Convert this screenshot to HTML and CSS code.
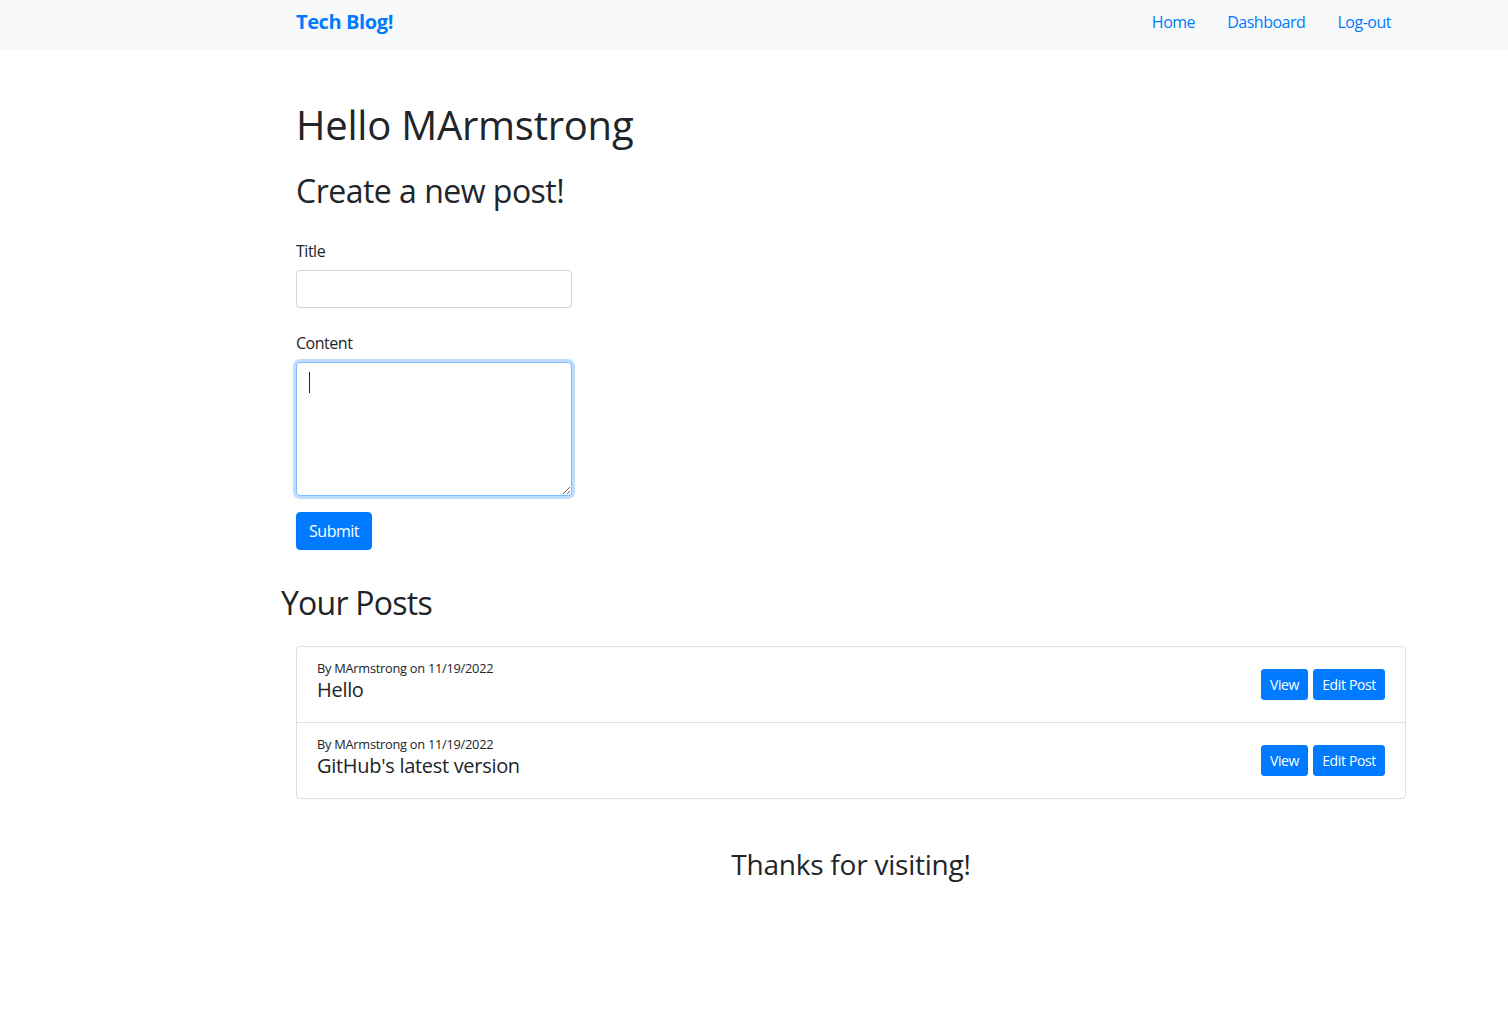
FILE: index.html
```html
<!DOCTYPE html>
<html lang="en">
<head>
<meta charset="utf-8">
<title>Tech Blog!</title>
<link rel="stylesheet" href="styles.css">
</head>
<body>
<nav class="navbar">
  <div class="nav-inner">
    <a class="brand" href="#">Tech Blog!</a>
    <ul class="nav-links">
      <li><a href="#">Home</a></li>
      <li><a href="#">Dashboard</a></li>
      <li><a href="#">Log-out</a></li>
    </ul>
  </div>
</nav>
<main class="container">
  <h1 class="greeting">Hello MArmstrong</h1>
  <h2 class="create-title">Create a new post!</h2>
  <form class="post-form">
    <div class="form-group">
      <label class="form-label" for="title">Title</label>
      <input class="form-control" id="title" type="text">
    </div>
    <div class="form-group content-group">
      <label class="form-label" for="content">Content</label>
      <textarea class="form-control textarea focused" id="content"></textarea>
      <span class="caret"></span>
    </div>
    <button class="btn btn-primary" type="button">Submit</button>
  </form>
  <h2 class="posts-title">Your Posts</h2>
  <ul class="list-group">
    <li class="list-item">
      <div class="post-info">
        <small class="post-meta">By MArmstrong on 11/19/2022</small>
        <h5 class="post-name">Hello</h5>
      </div>
      <div class="post-actions">
        <a class="btn btn-sm" href="#">View</a>
        <a class="btn btn-sm" href="#">Edit Post</a>
      </div>
    </li>
    <li class="list-item">
      <div class="post-info">
        <small class="post-meta">By MArmstrong on 11/19/2022</small>
        <h5 class="post-name">GitHub's latest version</h5>
      </div>
      <div class="post-actions">
        <a class="btn btn-sm" href="#">View</a>
        <a class="btn btn-sm" href="#">Edit Post</a>
      </div>
    </li>
  </ul>
</main>
<footer class="footer">
  <h3 class="thanks">Thanks for visiting!</h3>
</footer>
</body>
</html>
```
FILE: styles.css
```css
* { box-sizing: border-box; }
html, body { margin: 0; padding: 0; }
body {
  font-family: "Open Sans", "Noto Sans", sans-serif;
  font-size: 16px;
  line-height: 1.5;
  letter-spacing: -0.03em;
  color: #212529;
  background: #fff;
}
a { text-decoration: none; }

.navbar {
  background: #f8f9fa;
  height: 50px;
}
.nav-inner {
  margin-left: 281px;
  width: 1140px;
  padding: 0 15px 6px;
  height: 100%;
  display: flex;
  align-items: center;
  justify-content: space-between;
}
.brand {
  color: #007bff;
  font-size: 20px;
  font-weight: 700;
  line-height: 30px;
  letter-spacing: -0.02em;
}
.nav-links {
  list-style: none;
  margin: 0;
  padding: 0;
  display: flex;
}
.nav-links a {
  display: block;
  color: #007bff;
  padding: 0 16px;
  line-height: 24px;
}
.nav-links li:last-child a { padding-right: 15px; }

.container {
  margin-left: 281px;
  width: 1140px;
  padding: 0 15px;
  display: flex;
  flex-direction: column;
}
.greeting {
  font-size: 40px;
  font-weight: 500;
  line-height: 1.2;
  letter-spacing: -0.006em;
  margin: 51px 0 23px;
}
.create-title {
  font-size: 32px;
  font-weight: 500;
  line-height: 1.2;
  letter-spacing: -0.016em;
  margin: 0 0 29px;
}
.post-form {
  width: 276px;
  display: flex;
  flex-direction: column;
  align-items: flex-start;
}
.form-group {
  width: 100%;
  display: flex;
  flex-direction: column;
  margin-bottom: 23px;
  position: relative;
}
.content-group { margin-bottom: 16px; }
.form-label {
  line-height: 24px;
  margin-bottom: 7px;
}
.form-control {
  display: block;
  width: 100%;
  height: 38px;
  padding: 6px 12px;
  font: inherit;
  color: #495057;
  background: #fff;
  border: 1px solid #ced4da;
  border-radius: 4px;
  outline: none;
}
.textarea {
  height: 134px;
  resize: vertical;
}
.focused {
  border-color: #80bdff;
  box-shadow: 0 0 0 3px rgba(0, 123, 255, 0.25);
}
.caret {
  position: absolute;
  left: 13px;
  top: 41px;
  width: 1px;
  height: 21px;
  background: #212529;
}
.btn {
  display: inline-block;
  background: #007bff;
  color: #fff;
  border: 1px solid #007bff;
  border-radius: 4px;
  font: inherit;
  letter-spacing: -0.03em;
  padding: 6px 12px;
  line-height: 24px;
  cursor: pointer;
}
.posts-title {
  font-size: 32px;
  font-weight: 500;
  line-height: 1.2;
  letter-spacing: -0.024em;
  margin: 34px 0 23px -15px;
}
.list-group {
  list-style: none;
  margin: 0;
  padding: 0;
  border: 1px solid rgba(0, 0, 0, 0.125);
  border-radius: 4px;
}
.list-item {
  display: flex;
  justify-content: space-between;
  align-items: center;
  padding: 12px 20px;
}
.list-item + .list-item { border-top: 1px solid rgba(0, 0, 0, 0.125); }
.post-info { display: flex; flex-direction: column; }
.post-meta {
  font-size: 12.8px;
  line-height: 1.5;
  letter-spacing: -0.02em;
}
.post-name {
  font-size: 20px;
  font-weight: 500;
  line-height: 1.2;
  letter-spacing: -0.015em;
  margin: 0 0 8px;
}
.post-actions { display: flex; gap: 5px; }
.btn-sm {
  font-size: 14px;
  line-height: 21px;
  letter-spacing: -0.025em;
  padding: 4px 8px;
  border-radius: 3px;
}
.footer {
  margin-left: 281px;
  width: 1140px;
  padding: 0 15px;
  text-align: center;
}
.thanks {
  font-size: 28px;
  font-weight: 500;
  line-height: 1.2;
  letter-spacing: -0.008em;
  margin: 49px 0 0;
}
```
